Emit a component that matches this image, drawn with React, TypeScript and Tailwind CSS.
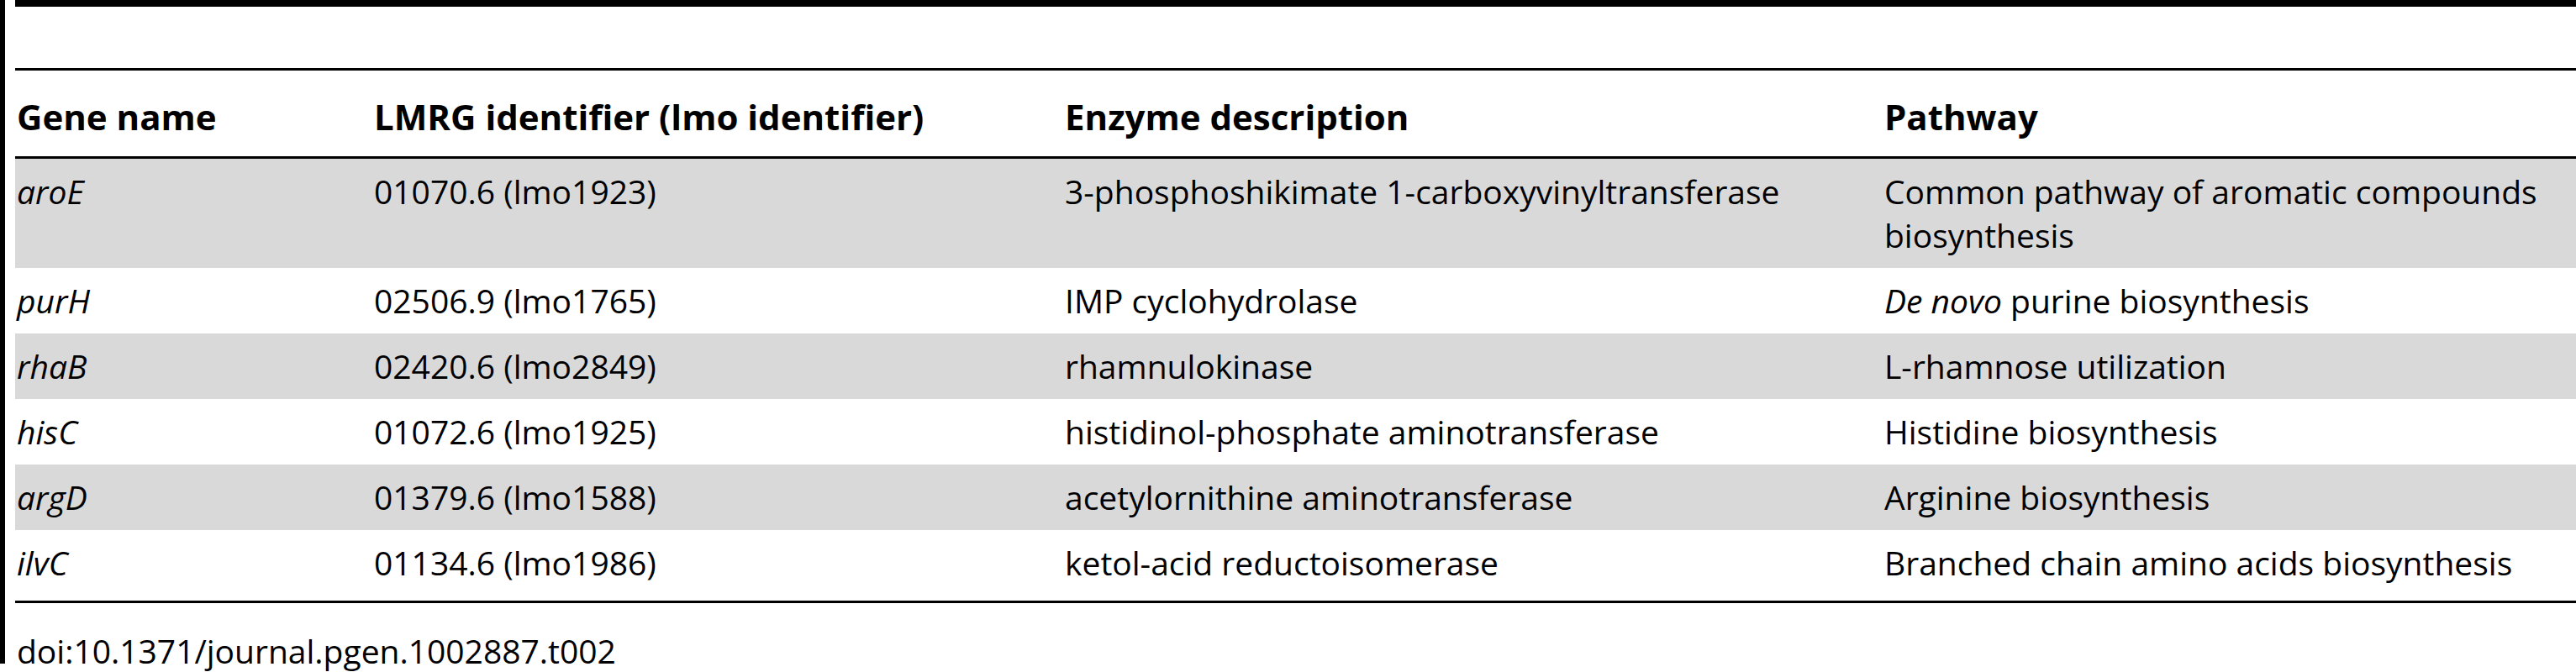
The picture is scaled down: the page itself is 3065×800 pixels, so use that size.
import React from 'react'

interface Row {
  gene: string
  lmrg: string
  enzyme: string
  pathway: React.ReactNode
  shaded: boolean
}

const rows: Row[] = [
  {
    gene: 'aroE',
    lmrg: '01070.6 (lmo1923)',
    enzyme: '3-phosphoshikimate 1-carboxyvinyltransferase',
    pathway: 'Common pathway of aromatic compounds biosynthesis',
    shaded: true,
  },
  {
    gene: 'purH',
    lmrg: '02506.9 (lmo1765)',
    enzyme: 'IMP cyclohydrolase',
    pathway: (
      <>
        <i>De novo</i> purine biosynthesis
      </>
    ),
    shaded: false,
  },
  {
    gene: 'rhaB',
    lmrg: '02420.6 (lmo2849)',
    enzyme: 'rhamnulokinase',
    pathway: 'L-rhamnose utilization',
    shaded: true,
  },
  {
    gene: 'hisC',
    lmrg: '01072.6 (lmo1925)',
    enzyme: 'histidinol-phosphate aminotransferase',
    pathway: 'Histidine biosynthesis',
    shaded: false,
  },
  {
    gene: 'argD',
    lmrg: '01379.6 (lmo1588)',
    enzyme: 'acetylornithine aminotransferase',
    pathway: 'Arginine biosynthesis',
    shaded: true,
  },
  {
    gene: 'ilvC',
    lmrg: '01134.6 (lmo1986)',
    enzyme: 'ketol-acid reductoisomerase',
    pathway: 'Branched chain amino acids biosynthesis',
    shaded: false,
  },
]

const cols = 'grid grid-cols-[425px_822px_975px_1fr]'

export default function App() {
  return (
    <div
      className="relative w-[3065px] h-[800px] bg-white text-black overflow-hidden"
      style={{ fontFamily: '"Open Sans", "DejaVu Sans", sans-serif' }}
    >
      {/* left edge bar */}
      <div className="absolute left-0 top-0 w-[6px] h-[790px] bg-black" />

      <div className="pl-[18px]">
        <div className="h-[8px] bg-black" />
        <div className="h-[73px]" />
        <div className="h-[3px] bg-black" />

        {/* header */}
        <div className={`${cols} h-[102px] items-center text-[42px] leading-[52px] font-bold pt-[8px]`}>
          <div className="pl-[2px]">Gene name</div>
          <div className="pl-[2px]">LMRG identifier (lmo identifier)</div>
          <div className="pl-[2px]">Enzyme description</div>
          <div className="pl-[2px]">Pathway</div>
        </div>
        <div className="h-[3px] bg-black" />

        {rows.map((r, i) => (
          <div
            key={r.gene}
            className={`${cols} text-[39px] leading-[52px] pt-[13px] ${
              i === rows.length - 1 ? 'pb-[19px]' : 'pb-[13px]'
            } ${r.shaded ? 'bg-[#d9d9d9]' : 'bg-white'}`}
          >
            <div className="pl-[2px] italic">{r.gene}</div>
            <div className="pl-[2px]">{r.lmrg}</div>
            <div className="pl-[2px]">{r.enzyme}</div>
            <div className="pl-[2px] pr-[10px]">{r.pathway}</div>
          </div>
        ))}

        <div className="h-[3px] bg-black" />
      </div>

      <div className="pl-[20px] pt-[31px] text-[39px] leading-[52px]">
        doi:10.1371/journal.pgen.1002887.t002
      </div>
    </div>
  )
}
